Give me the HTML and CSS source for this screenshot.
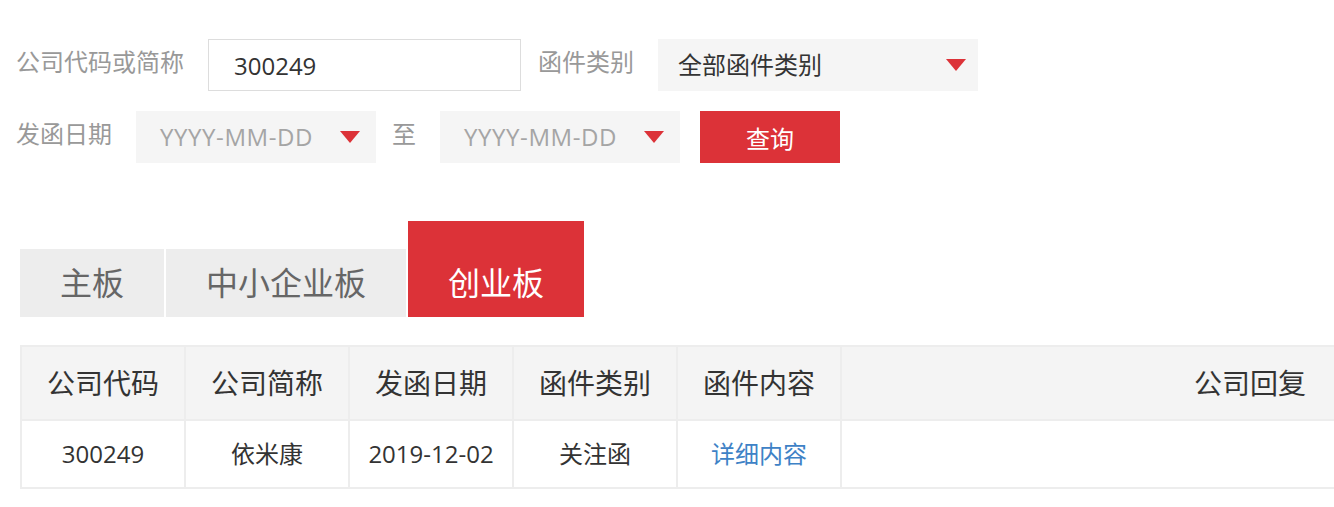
FILE: index.html
```html
<!DOCTYPE html>
<html lang="zh-CN">
<head>
  <meta charset="UTF-8">
  <meta name="viewport" content="width=device-width, initial-scale=1.0">
  <title>监管函件查询</title>
  <link rel="stylesheet" href="styles.css">
</head>
<body>
  <div class="page">
    <form class="search" id="search-form">
      <div class="row">
        <label class="label" for="code">公司代码或简称</label>
        <input class="text-field" type="text" id="code" name="code" value="300249">
        <label class="label">函件类别</label>
        <div class="select wide">
          <span>全部函件类别</span>
          <i class="arrow"></i>
        </div>
      </div>
      <div class="row">
        <label class="label">发函日期</label>
        <div class="select date">
          <span class="placeholder">YYYY-MM-DD</span>
          <i class="arrow"></i>
        </div>
        <span class="label to">至</span>
        <div class="select date">
          <span class="placeholder">YYYY-MM-DD</span>
          <i class="arrow"></i>
        </div>
        <button type="submit" class="btn">查询</button>
      </div>
    </form>

    <ul class="tabs">
      <li class="tab">主板</li>
      <li class="tab">中小企业板</li>
      <li class="tab active">创业板</li>
    </ul>

    <table class="result">
      <colgroup>
        <col class="col">
        <col class="col">
        <col class="col">
        <col class="col">
        <col class="col">
        <col class="col-reply">
      </colgroup>
      <thead>
        <tr>
          <th>公司代码</th>
          <th>公司简称</th>
          <th>发函日期</th>
          <th>函件类别</th>
          <th>函件内容</th>
          <th>公司回复</th>
        </tr>
      </thead>
      <tbody>
        <tr>
          <td>300249</td>
          <td>依米康</td>
          <td>2019-12-02</td>
          <td>关注函</td>
          <td><a href="#" class="link">详细内容</a></td>
          <td></td>
        </tr>
      </tbody>
    </table>
  </div>
</body>
</html>
```

FILE: styles.css
```css
html, body {
  overflow: hidden;
}

body {
  margin: 0;
  padding: 0;
  background-color: #fff;
  font-family: "Open Sans", "Noto Sans CJK SC", sans-serif;
  color: #333;
}

.page {
  padding: 39px 0 0 16px;
}

.search .row {
  display: flex;
  align-items: flex-start;
  height: 52px;
  margin-bottom: 20px;
}

.label {
  font-size: 24px;
  line-height: 46px;
  color: #999;
  margin-right: 24px;
  white-space: nowrap;
}

.label.to {
  margin: 0 24px 0 16px;
}

.text-field {
  box-sizing: border-box;
  width: 313px;
  height: 52px;
  margin: 0 17px 0 0;
  padding: 0 25px;
  border: 1px solid #ddd;
  font-family: inherit;
  font-size: 24px;
  color: #333;
  outline: none;
}

.select {
  box-sizing: border-box;
  display: flex;
  align-items: center;
  justify-content: space-between;
  height: 52px;
  background-color: #f5f5f5;
  font-size: 24px;
  line-height: 46px;
}

.select.wide {
  width: 320px;
  padding: 0 12px 0 20px;
  color: #333;
}

.select.date {
  width: 240px;
  padding: 0 16px 0 24px;
}

.placeholder {
  color: #a5a5a5;
  letter-spacing: 0.6px;
}

.arrow {
  width: 0;
  height: 0;
  border-left: 10px solid transparent;
  border-right: 10px solid transparent;
  border-top: 12px solid #dc3238;
}

.btn {
  width: 140px;
  height: 52px;
  margin-left: 20px;
  border: none;
  background-color: #dc3238;
  color: #fff;
  font-family: inherit;
  font-size: 24px;
  cursor: pointer;
}

.tabs {
  display: flex;
  align-items: flex-end;
  gap: 2px;
  list-style: none;
  margin: 58px 0 0 4px;
  padding: 0;
}

.tab {
  height: 68px;
  line-height: 68px;
  padding: 0 40px;
  background-color: #ededed;
  color: #666;
  font-size: 32px;
}

.tab.active {
  padding-top: 28px;
  background-color: #dc3238;
  color: #fff;
}

.result {
  margin: 28px 0 0 4px;
  width: 1640px;
  table-layout: fixed;
  border-collapse: collapse;
  border: 2px solid #ededed;
}

.col {
  width: 164px;
}

.col-reply {
  width: 818px;
}

.result th,
.result td {
  padding: 0;
  border: 2px solid #ededed;
  text-align: center;
  font-weight: normal;
  color: #333;
}

.result th {
  height: 72px;
  line-height: 72px;
  background-color: #f4f4f4;
  font-size: 28px;
}

.result td {
  height: 66px;
  line-height: 66px;
  font-size: 24px;
}

.link {
  color: #3e82c6;
  text-decoration: none;
}
```
